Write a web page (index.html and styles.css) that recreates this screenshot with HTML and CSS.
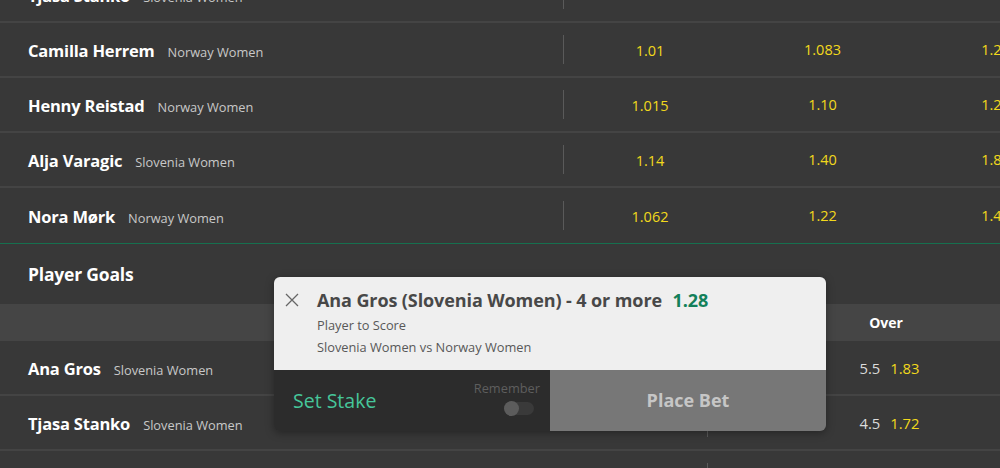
FILE: index.html
```html
<!DOCTYPE html>
<html lang="en">
<head>
  <meta charset="UTF-8" />
  <title>Handball | Player Markets</title>
  <link rel="stylesheet" href="styles.css">
</head>
<body>
  <div class="page">

    <div class="market">
      <div class="row">
        <div class="player"><span class="name">Tjasa Stanko</span><span class="team">Slovenia Women</span></div>
        <div class="odds"></div>
        <div class="odds"></div>
        <div class="odds"></div>
        <div class="odds"></div>
      </div>
      <div class="row">
        <div class="player"><span class="name">Camilla Herrem</span><span class="team">Norway Women</span></div>
        <div class="odds">1.01</div>
        <div class="odds">1.083</div>
        <div class="odds">1.20</div>
        <div class="odds">1.50</div>
      </div>
      <div class="row">
        <div class="player"><span class="name">Henny Reistad</span><span class="team">Norway Women</span></div>
        <div class="odds">1.015</div>
        <div class="odds">1.10</div>
        <div class="odds">1.25</div>
        <div class="odds">1.57</div>
      </div>
      <div class="row">
        <div class="player"><span class="name">Alja Varagic</span><span class="team">Slovenia Women</span></div>
        <div class="odds">1.14</div>
        <div class="odds">1.40</div>
        <div class="odds">1.80</div>
        <div class="odds">2.50</div>
      </div>
      <div class="row last">
        <div class="player"><span class="name">Nora Mørk</span><span class="team">Norway Women</span></div>
        <div class="odds">1.062</div>
        <div class="odds">1.22</div>
        <div class="odds">1.44</div>
        <div class="odds">1.90</div>
      </div>
    </div>

    <div class="market goals">
      <h3 class="market-title">Player Goals</h3>
      <div class="col-head">
        <div></div>
        <div>Over</div>
        <div>Under</div>
      </div>
      <div class="goal-row">
        <div class="player"><span class="name">Ana Gros</span><span class="team">Slovenia Women</span></div>
        <div class="line"><span class="hcp">5.5</span><span class="price">1.83</span></div>
        <div class="line"><span class="hcp">5.5</span><span class="price">1.83</span></div>
      </div>
      <div class="goal-row">
        <div class="player"><span class="name">Tjasa Stanko</span><span class="team">Slovenia Women</span></div>
        <div class="line"><span class="hcp">4.5</span><span class="price">1.72</span></div>
        <div class="line"><span class="hcp">4.5</span><span class="price">2.00</span></div>
      </div>
      <div class="goal-row">
        <div class="player"><span class="name">Camilla Herrem</span><span class="team">Norway Women</span></div>
        <div class="line"><span class="hcp">4.5</span><span class="price">1.80</span></div>
        <div class="line"><span class="hcp">4.5</span><span class="price">1.90</span></div>
      </div>
    </div>

  </div>

  <!-- quick bet slip -->
  <div class="betslip">
    <div class="slip-top">
      <svg class="close" width="14" height="14" viewBox="0 0 14 14">
        <path d="M1 1 L13 13 M13 1 L1 13" stroke="#666" stroke-width="1.3" fill="none" />
      </svg>
      <div class="slip-info">
        <div class="selection">Ana Gros (Slovenia Women) - 4 or more <span class="slip-odds">1.28</span></div>
        <div class="slip-sub market-name">Player to Score</div>
        <div class="slip-sub">Slovenia Women vs Norway Women</div>
      </div>
    </div>
    <div class="slip-bottom">
      <div class="stake">
        <span class="set-stake">Set Stake</span>
        <div class="remember">
          <span>Remember</span>
          <span class="toggle"><span class="knob"></span></span>
        </div>
      </div>
      <button class="place-bet">Place Bet</button>
    </div>
  </div>
</body>
</html>
```

FILE: styles.css
```css
body {
  font-family: 'Open Sans', 'Noto Sans', sans-serif;
  background-color: #383838;
  color: #fff;
  margin: 0;
  padding: 0;
  overflow: hidden;
}

.page {
  margin-top: -32px;
  width: 1430px;
}

.row {
  display: grid;
  grid-template-columns: 563px repeat(4, 173px);
  height: 53px;
  align-items: center;
  border-bottom: 2px solid #444;
}

.row.last {
  border-bottom: none;
  height: 55px;
}

.player {
  padding-left: 28px;
  display: flex;
  align-items: baseline;
  gap: 13px;
  padding-top: 2px;
}

.name {
  font-size: 16.5px;
  font-weight: 700;
  letter-spacing: -0.2px;
}

.team {
  font-size: 12.8px;
  color: #c8c8c8;
}

.odds {
  text-align: center;
  color: #f2d81c;
  font-size: 14.5px;
}

.row .odds:nth-child(2) {
  border-left: 1px solid #5a5a5a;
  height: 29px;
  line-height: 31px;
}

.goals {
  border-top: 1px solid #16704f;
}

.market-title {
  margin: 0;
  height: 60px;
  line-height: 60px;
  padding-left: 28px;
  font-size: 17.5px;
  font-weight: 700;
  letter-spacing: -0.2px;
}

.col-head {
  display: grid;
  grid-template-columns: 707px 358px 358px;
  height: 37px;
  align-items: center;
  background: #454545;
  font-size: 14px;
  font-weight: 700;
}

.col-head div {
  text-align: center;
}

.goal-row {
  display: grid;
  grid-template-columns: 707px 358px 358px;
  height: 53px;
  align-items: center;
  border-bottom: 2px solid #444;
}

.line {
  text-align: center;
  font-size: 14.8px;
  padding-left: 6px;
}

.goal-row .line:nth-child(2) {
  border-left: 1px solid #5a5a5a;
  height: 29px;
  line-height: 31px;
}

.hcp {
  color: #ddd;
  margin-right: 10px;
}

.price {
  color: #f2d81c;
}

.betslip {
  position: absolute;
  left: 274px;
  top: 277px;
  width: 552px;
  border-radius: 6px;
  overflow: hidden;
  box-shadow: 0 2px 8px rgba(0,0,0,0.35);
}

.slip-top {
  background: #efefef;
  height: 93px;
  display: flex;
  box-sizing: border-box;
  padding: 15px 0 0 11px;
}

.close {
  margin-top: 1px;
}

.slip-info {
  margin-left: 18px;
}

.selection {
  color: #484848;
  font-size: 18px;
  font-weight: 700;
  line-height: 17px;
  letter-spacing: -0.1px;
}

.slip-odds {
  color: #13805a;
  margin-left: 6px;
}

.slip-sub {
  color: #585858;
  font-size: 12.8px;
  line-height: 22px;
}

.market-name {
  margin-top: 5px;
}

.slip-bottom {
  display: flex;
  height: 61px;
}

.stake {
  width: 276px;
  background: #2c2c2c;
  display: flex;
  align-items: center;
  justify-content: space-between;
  padding: 0 10px 0 19px;
  box-sizing: border-box;
}

.set-stake {
  color: #46c69a;
  font-size: 19.5px;
}

.remember {
  display: flex;
  flex-direction: column;
  align-items: flex-end;
  color: #5e5e5e;
  font-size: 12.8px;
  margin-top: -8px;
}

.toggle {
  display: block;
  width: 30px;
  height: 13px;
  margin: 5px 6px 0 0;
  border-radius: 7px;
  background: #3a3a3a;
  position: relative;
}

.knob {
  position: absolute;
  left: 0;
  top: -1px;
  width: 15px;
  height: 15px;
  border-radius: 50%;
  background: #5c5c5c;
}

.place-bet {
  flex: 1;
  border: none;
  background: #777;
  color: #c6c6c6;
  font-family: 'Open Sans', 'Noto Sans', sans-serif;
  font-size: 18px;
  font-weight: 700;
  padding: 0 0 2px;
}
```
